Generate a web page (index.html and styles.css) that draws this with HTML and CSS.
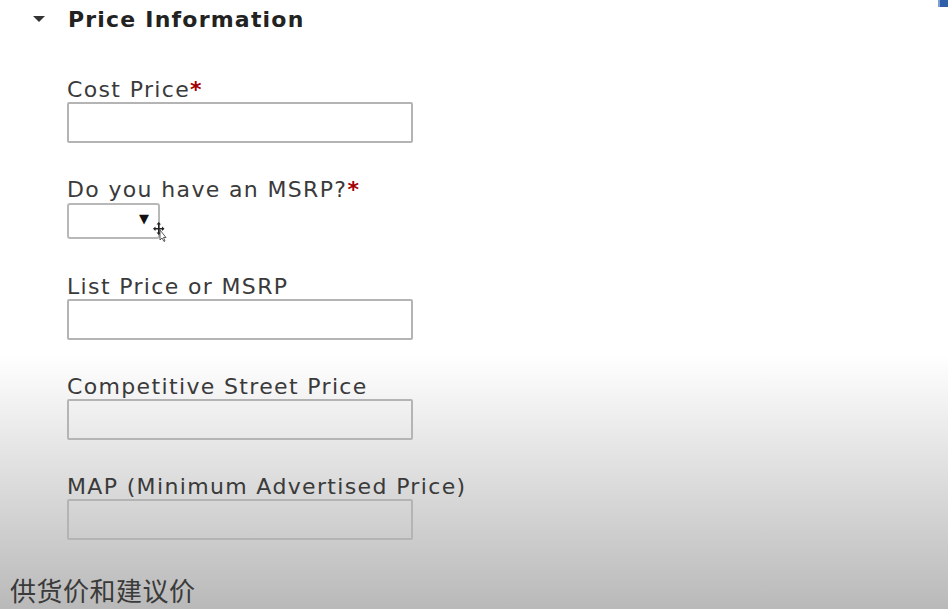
FILE: index.html
```html
<!DOCTYPE html>
<html lang="en">
<head>
<meta charset="utf-8">
<link rel="stylesheet" href="styles.css">
</head>
<body>
<div class="page">
  <div class="corner"></div>
  <h2 class="section-title"><span class="caret"></span>Price Information</h2>
  <div class="fields">
    <div class="field">
      <label class="label">Cost Price<span class="req">*</span></label>
      <div class="input"></div>
    </div>
    <div class="field">
      <label class="label">Do you have an MSRP?<span class="req">*</span></label>
      <div class="select-wrap">
        <div class="select"><span class="arrow">▼</span></div>
        <svg class="cursor" width="14" height="20" viewBox="0 0 14 20">
          <g fill="#222">
            <rect x="5" y="2" width="1.5" height="9"/>
            <rect x="1" y="6" width="9" height="1.5"/>
            <path d="M5.75 0 L3.5 2.5 L8 2.5 Z"/>
            <path d="M5.75 13 L3.5 10.5 L8 10.5 Z"/>
            <path d="M0 6.75 L2.5 4.5 L2.5 9 Z"/>
            <path d="M11.5 6.75 L9 4.5 L9 9 Z"/>
          </g>
          <path d="M7 8 L7 18 L9 16 L11 19.5 L12 19 L10.5 15.5 L13 15.5 Z" fill="#fff" stroke="#333" stroke-width="0.8"/>
        </svg>
      </div>
    </div>
    <div class="field">
      <label class="label">List Price or MSRP</label>
      <div class="input"></div>
    </div>
    <div class="field">
      <label class="label">Competitive Street Price</label>
      <div class="input"></div>
    </div>
    <div class="field">
      <label class="label">MAP (Minimum Advertised Price)</label>
      <div class="input"></div>
    </div>
  </div>
  <div class="subtitle">供货价和建议价</div>
</div>
</body>
</html>
```

FILE: styles.css
```css
html, body {
  margin: 0;
  padding: 0;
}
body {
  width: 948px;
  height: 609px;
  overflow: hidden;
  background: linear-gradient(to bottom, #ffffff 0px, #ffffff 355px, #b9b9b9 609px);
  font-family: "DejaVu Sans", Verdana, sans-serif;
  color: #333;
}
.page {
  position: relative;
  height: 609px;
  display: flex;
  flex-direction: column;
}
.corner {
  position: absolute;
  top: 0;
  right: 0;
  width: 8px;
  height: 7px;
  background: #2f5fa8;
  border-left: 2px solid #7ea0d6;
}
.section-title {
  margin: 0;
  padding: 6px 0 0 33px;
  height: 32px;
  display: flex;
  align-items: center;
  font-size: 22px;
  letter-spacing: 1.2px;
  font-weight: bold;
  color: #222;
  box-sizing: border-box;
}
.caret {
  width: 0;
  height: 0;
  border-left: 6px solid transparent;
  border-right: 6px solid transparent;
  border-top: 6px solid #333;
  margin-right: 23px;
}
.fields {
  padding-left: 67px;
  padding-top: 46px;
  display: flex;
  flex-direction: column;
  gap: 35px;
}
.field {
  display: flex;
  flex-direction: column;
}
.label {
  font-size: 22px;
  letter-spacing: 1.35px;
  line-height: 24px;
  color: #3a3a3a;
  display: block;
}
.req {
  color: #a40000;
  font-weight: bold;
}
.input {
  width: 342px;
  height: 37px;
  border: 2px solid #b4b4b4;
  border-radius: 2px;
  background: transparent;
}
.select-wrap {
  position: relative;
  width: 120px;
  height: 38px;
}
.select {
  width: 89px;
  height: 32px;
  margin-top: 1px;
  border: 2px solid #b8b8b8;
  border-radius: 3px;
  background: #fff;
  position: relative;
}
.arrow {
  position: absolute;
  right: 9px;
  top: 6px;
  font-size: 13px;
  color: #111;
}
.cursor {
  position: absolute;
  left: 86px;
  top: 20px;
}
.subtitle {
  position: absolute;
  left: 10px;
  top: 573px;
  font-family: "Noto Sans CJK SC", sans-serif;
  font-size: 26px;
  line-height: 34px;
  color: #3a3a3a;
  letter-spacing: 0.5px;
}
```
